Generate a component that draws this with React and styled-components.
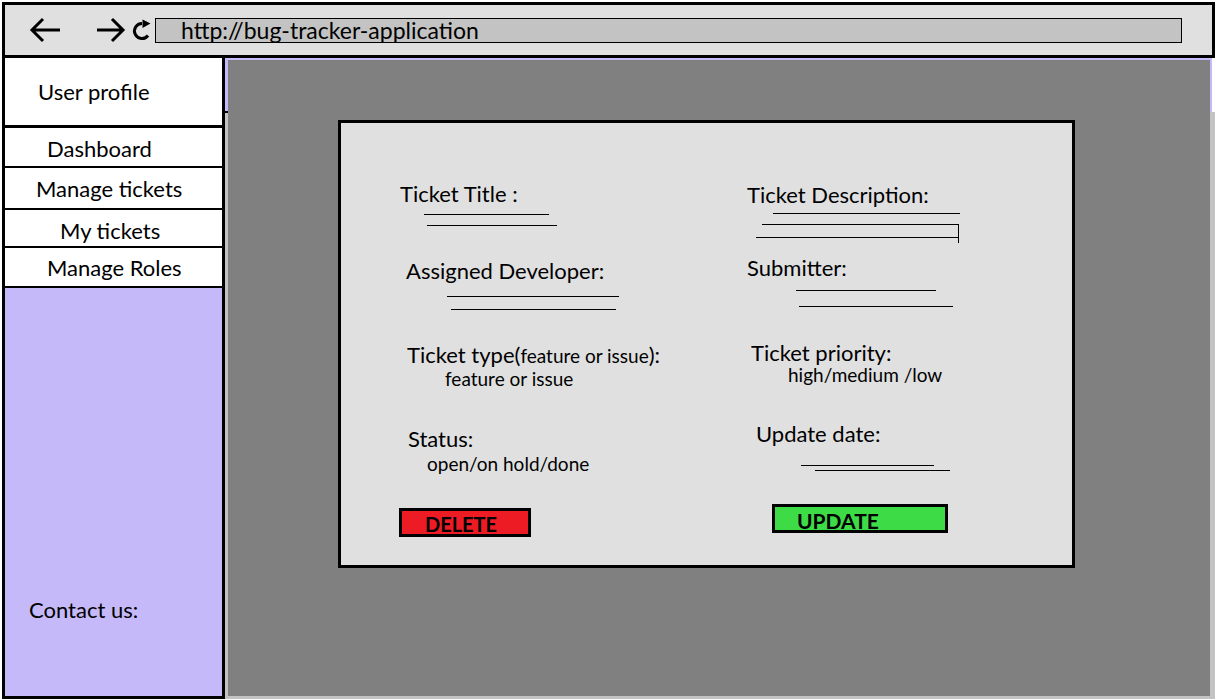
import styled, { createGlobalStyle } from 'styled-components'

const GlobalStyle = createGlobalStyle`
    html, body { margin: 0; padding: 0; background: #fff; }
    body { font-family: Lato, "Open Sans", sans-serif; color: #000; }
`

const Page = styled.div`
    width: 1215px;
    height: 699px;
    display: flex;
    flex-direction: column;
    overflow: hidden;
`
const TopBar = styled.div`
    margin: 2px 0 0 2px;
    height: 50px;
    border: 3px solid #000;
    background: #e0e0e0;
    display: flex;
    align-items: center;
`
const NavIcon = styled.svg`
    flex: none;
    margin-left: ${p => p.$ml}px;
`
const Address = styled.div`
    margin-left: 1px;
    width: 1027px;
    height: 25px;
    border: 1px solid #000;
    background: #c3c3c3;
    display: flex;
    align-items: center;
    padding-left: 25px;
    box-sizing: border-box;
    font-size: 23px;
`
const Body = styled.div`
    flex: 1;
    display: flex;
`
const Sidebar = styled.div`
    margin-left: 2px;
    width: 217px;
    flex: none;
    border: 3px solid #000;
    border-top: none;
    background: #c5b9f9;
    display: flex;
    flex-direction: column;
`
const NavItem = styled.div`
    height: ${p => p.$h}px;
    box-sizing: border-box;
    border-bottom: ${p => p.$b}px solid #000;
    background: #fff;
    display: flex;
    align-items: center;
    padding-left: ${p => p.$pl}px;
    padding-top: ${p => p.$pt || 0}px;
    font-size: 22px;
`
const Contact = styled.div`
    margin-top: auto;
    margin-bottom: 73px;
    padding-left: 24px;
    font-size: 22px;
`
const Main = styled.div`
    flex: 1;
    position: relative;
    background: #808080;
    border-top: 2px solid #c5b9f9;
    border-left: 3px solid #c3c3c3;
    border-right: 5px solid #c3c3c3;
    border-bottom: 3px solid #c3c3c3;
    padding: 60px 0 0 110px;
    &::before {
        content: '';
        position: absolute;
        top: -2px;
        left: -3px;
        width: 982px;
        height: 52px;
        border-top: 2px solid #c5b9f9;
        border-left: 3px solid #c5b9f9;
        border-right: 2px solid #c5b9f9;
        box-shadow: 3px 0 0 #fff;
    }
    &::after {
        content: '';
        position: absolute;
        top: 51px;
        left: -6px;
        width: 6px;
        height: 2px;
        background: #000;
    }
`
const Card = styled.div`
    width: 731px;
    height: 442px;
    border: 3px solid #000;
    background: #e0e0e0;
    display: flex;
`
const Column = styled.div`
    display: flex;
    flex-direction: column;
    align-items: flex-start;
    margin-left: ${p => p.$ml}px;
    width: ${p => p.$w}px;
`
const Label = styled.div`
    font-size: 22px;
    line-height: 26px;
    white-space: nowrap;
    margin-top: ${p => p.$mt}px;
    margin-left: ${p => p.$ml}px;
`
const Small = styled.span`
    font-size: 19px;
`
const Value = styled.div`
    font-size: 19px;
    line-height: 22px;
    white-space: nowrap;
    margin-top: ${p => p.$mt}px;
    margin-left: ${p => p.$ml}px;
`
const Rule = styled.div`
    width: ${p => p.$w}px;
    height: ${p => p.$h || 0}px;
    border-top: 1px solid #000;
    border-right: ${p => (p.$corner ? '1px solid #000' : 'none')};
    margin-top: ${p => p.$mt}px;
    margin-left: ${p => p.$ml}px;
`
const Button = styled.div`
    width: ${p => p.$w}px;
    height: 23px;
    border: 3px solid #000;
    background: ${p => p.$bg};
    margin-top: ${p => p.$mt}px;
    margin-left: ${p => p.$ml}px;
    padding-left: ${p => p.$pl}px;
    box-sizing: content-box;
    font-size: ${p => p.$fs}px;
    font-weight: 700;
    line-height: 27px;
`

const BackArrow = () => (
    <NavIcon $ml={23} width="34" height="26" viewBox="0 0 34 26">
        <path d="M4 13 H32 M15 2 L4 13 L15 24" fill="none" stroke="#000" strokeWidth="3" />
    </NavIcon>
)
const ForwardArrow = () => (
    <NavIcon $ml={34} width="30" height="26" viewBox="0 0 30 26">
        <path d="M1 13 H27 M16 2 L27 13 L16 24" fill="none" stroke="#000" strokeWidth="3" />
    </NavIcon>
)
const Refresh = () => (
    <NavIcon $ml={4} width="24" height="24" viewBox="0 0 24 24">
        <path d="M12 5.5 A7.5 7.5 0 1 0 18 17.5" fill="none" stroke="#000" strokeWidth="3" />
        <path d="M12.5 1.5 L20.5 5.5 L12.5 10 Z" fill="#000" />
    </NavIcon>
)

export default function App() {
    return (
        <Page>
            <GlobalStyle />
            <TopBar>
                <BackArrow />
                <ForwardArrow />
                <Refresh />
                <Address>http://bug-tracker-application</Address>
            </TopBar>
            <Body>
                <Sidebar>
                    <NavItem $h={70} $b={3} $pl={33}>User profile</NavItem>
                    <NavItem $h={40} $b={2} $pl={42} $pt={2}>Dashboard</NavItem>
                    <NavItem $h={42} $b={2} $pl={31}>Manage tickets</NavItem>
                    <NavItem $h={38} $b={2} $pl={55} $pt={4}>My tickets</NavItem>
                    <NavItem $h={40} $b={2} $pl={42}>Manage Roles</NavItem>
                    <Contact>Contact us:</Contact>
                </Sidebar>
                <Main>
                    <Card>
                        <Column $ml={58} $w={348}>
                            <Label $mt={58} $ml={1}>Ticket Title :</Label>
                            <Rule $w={125} $mt={7} $ml={25} />
                            <Rule $w={130} $mt={10} $ml={28} />
                            <Label $mt={32} $ml={7}>Assigned Developer:</Label>
                            <Rule $w={172} $mt={12} $ml={48} />
                            <Rule $w={165} $mt={12} $ml={52} />
                            <Label $mt={32} $ml={8}>Ticket type(<Small>feature or issue</Small>):</Label>
                            <Value $mt={-1} $ml={46}>feature or issue</Value>
                            <Label $mt={36} $ml={9}>Status:</Label>
                            <Value $mt={1} $ml={28}>open/on hold/done</Value>
                            <Button $w={103} $bg="#ed1c24" $mt={33} $ml={0} $pl={23} $fs={20}>DELETE</Button>
                        </Column>
                        <Column $ml={0} $w={300}>
                            <Label $mt={59} $ml={0}>Ticket Description:</Label>
                            <Rule $w={187} $mt={5} $ml={26} />
                            <Rule $w={196} $h={13} $corner $mt={10} $ml={15} />
                            <Rule $w={202} $h={5} $corner $mt={-1} $ml={9} />
                            <Label $mt={12} $ml={0}>Submitter:</Label>
                            <Rule $w={140} $mt={9} $ml={49} />
                            <Rule $w={154} $mt={15} $ml={52} />
                            <Label $mt={33} $ml={4}>Ticket priority:</Label>
                            <Value $mt={-2} $ml={41}>high/medium /low</Value>
                            <Label $mt={35} $ml={9}>Update date:</Label>
                            <Rule $w={133} $mt={18} $ml={54} />
                            <Rule $w={135} $mt={4} $ml={68} />
                            <Button $w={148} $bg="#3ddc47" $mt={33} $ml={25} $pl={22} $fs={21}>UPDATE</Button>
                        </Column>
                    </Card>
                </Main>
            </Body>
        </Page>
    )
}
